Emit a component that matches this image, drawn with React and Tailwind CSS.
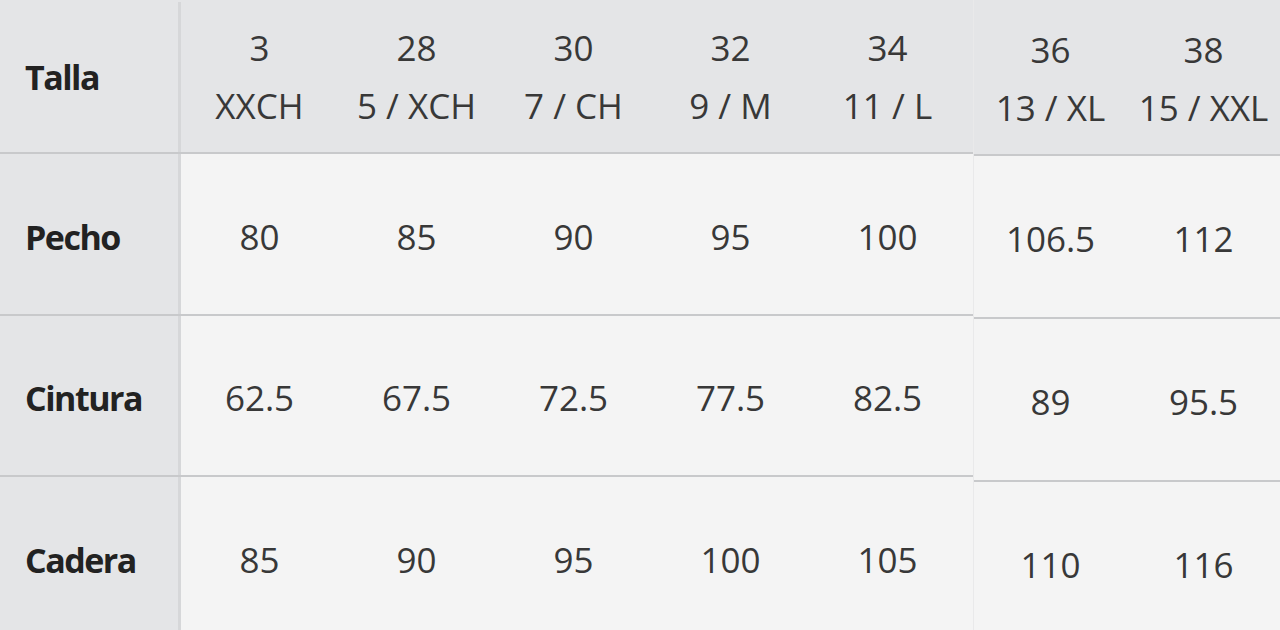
const leftCols = [
  { top: '3', bottom: 'XXCH', vals: ['80', '62.5', '85'] },
  { top: '28', bottom: '5 / XCH', vals: ['85', '67.5', '90'] },
  { top: '30', bottom: '7 / CH', vals: ['90', '72.5', '95'] },
  { top: '32', bottom: '9 / M', vals: ['95', '77.5', '100'] },
  { top: '34', bottom: '11 / L', vals: ['100', '82.5', '105'] }
]

const rightCols = [
  { top: '36', bottom: '13 / XL', vals: ['106.5', '89', '110'] },
  { top: '38', bottom: '15 / XXL', vals: ['112', '95.5', '116'] }
]

const labels = ['Pecho', 'Cintura', 'Cadera']

const leftRows = ['h-[162px] border-b-2', 'h-[161px] border-b-2', 'flex-1']
const leftPad = ['pt-[6px]', 'pt-[6px]', 'pt-[14px]']
const rightRows = ['h-[163px] border-b-2', 'h-[163px] border-b-2', 'flex-1']
const rightPad = ['pt-[6px]', 'pt-[6px]', 'pt-[18px]']

const HeadCell = ({ col, w }) => (
  <div className={`${w} flex flex-col items-center justify-center text-[35px] leading-[58px] text-[#383838]`}>
    <span>{col.top}</span>
    <span>{col.bottom}</span>
  </div>
)

const App = () => {
  return (
    <div
      className="w-[1280px] h-[630px] flex overflow-hidden bg-[#f4f4f4]"
      style={{ fontFamily: '"Open Sans", "Noto Sans", sans-serif' }}
    >

      {/* left block */}
      <div className="w-[974px] flex flex-col border-r border-[#e9e9ea]">

        <div className="h-[154px] flex bg-[#e4e5e7] border-b-2 border-[#c8c9cb] pt-[2px]">
          <div className="w-[181px] flex items-center pl-[25px] border-r-[3px] border-[#d6d7d9] text-[34px] font-bold tracking-[-1.5px] text-[#222]">
            Talla
          </div>
          {leftCols.map((col) => (
            <HeadCell key={col.top} col={col} w="w-[157px]" />
          ))}
        </div>

        {labels.map((label, i) => (
          <div key={label} className={`${leftRows[i]} flex border-[#c8c9cb]`}>
            <div className={`${leftPad[i]} w-[181px] flex items-center pl-[25px] bg-[#e4e5e7] border-r-[3px] border-[#d6d7d9] text-[34px] font-bold tracking-[-1.5px] text-[#222]`}>
              {label}
            </div>
            {leftCols.map((col) => (
              <div
                key={col.top}
                className={`${leftPad[i]} w-[157px] flex items-center justify-center text-[35px] text-[#383838]`}
              >
                {col.vals[i]}
              </div>
            ))}
          </div>
        ))}

      </div>

      {/* right block */}
      <div className="flex-1 flex flex-col">

        <div className="h-[156px] flex bg-[#e4e5e7] border-b-2 border-[#c8c9cb] pt-[3px]">
          {rightCols.map((col) => (
            <HeadCell key={col.top} col={col} w="flex-1" />
          ))}
        </div>

        {labels.map((label, i) => (
          <div key={label} className={`${rightRows[i]} ${rightPad[i]} flex border-[#c8c9cb]`}>
            {rightCols.map((col) => (
              <div
                key={col.top}
                className="flex-1 flex items-center justify-center text-[35px] text-[#383838]"
              >
                {col.vals[i]}
              </div>
            ))}
          </div>
        ))}

      </div>

    </div>
  )
}

export default App
